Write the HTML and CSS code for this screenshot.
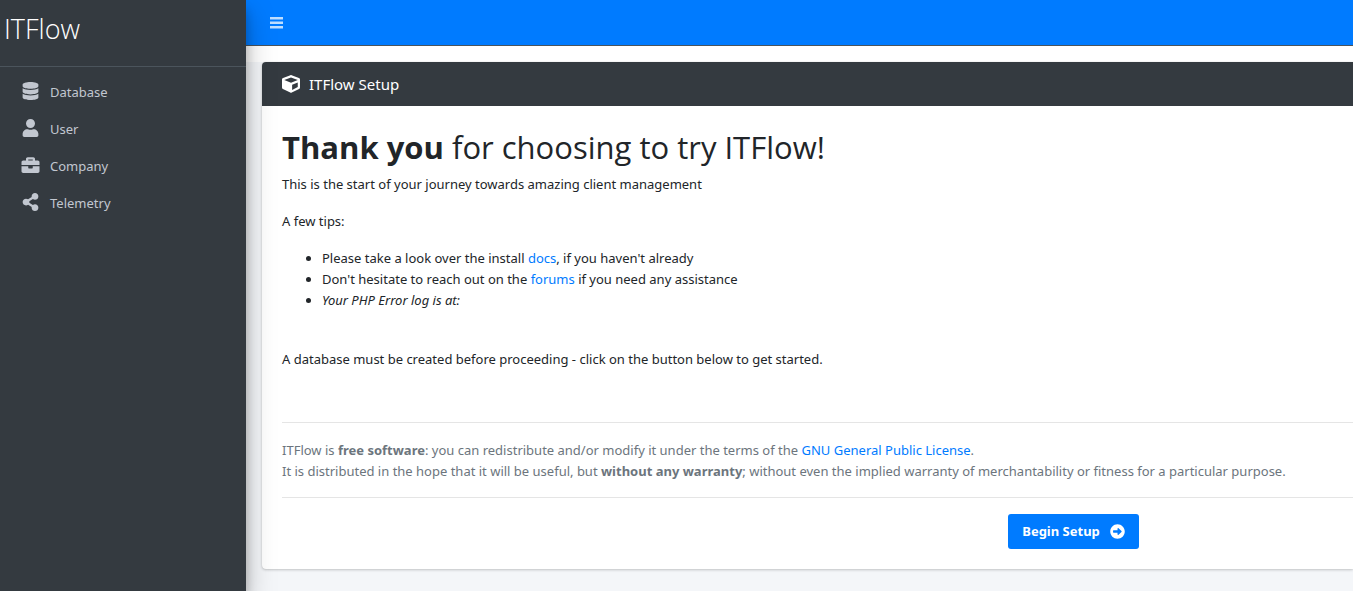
FILE: index.html
```html
<!DOCTYPE html>
<html lang="en">
<head>
<meta charset="utf-8">
<meta name="viewport" content="width=device-width, initial-scale=1">
<title>ITFlow Setup</title>
<link rel="stylesheet" href="styles.css">
</head>
<body>
<div class="wrapper">
  <aside class="sidebar">
    <a class="brand" href="#">ITFlow</a>
    <nav class="side-nav" aria-label="Setup steps">
      <a class="nav-link" href="#database"><svg class="nav-icon" viewBox="0 0 448 512" aria-hidden="true"><path d="M448 73.143v45.714C448 159.143 347.667 192 224 192S0 159.143 0 118.857V73.143C0 32.857 100.333 0 224 0s224 32.857 224 73.143zM448 176v102.857C448 319.143 347.667 352 224 352S0 319.143 0 278.857V176c48.125 33.143 136.208 48.572 224 48.572S399.874 209.143 448 176zm0 160v102.857C448 479.143 347.667 512 224 512S0 479.143 0 438.857V336c48.125 33.143 136.208 48.572 224 48.572S399.874 369.143 448 336z"/></svg><span>Database</span></a>
      <a class="nav-link" href="#user"><svg class="nav-icon" viewBox="0 0 448 512" aria-hidden="true"><path d="M224 256c70.7 0 128-57.3 128-128S294.7 0 224 0 96 57.3 96 128s57.3 128 128 128zm89.6 32h-16.7c-22.2 10.2-46.9 16-72.9 16s-50.6-5.8-72.9-16h-16.7C60.2 288 0 348.2 0 422.4V464c0 26.5 21.5 48 48 48h352c26.5 0 48-21.5 48-48v-41.6c0-74.2-60.2-134.4-134.4-134.4z"/></svg><span>User</span></a>
      <a class="nav-link" href="#company"><svg class="nav-icon" viewBox="0 0 512 512" aria-hidden="true"><path d="M320 336c0 8.84-7.16 16-16 16h-96c-8.84 0-16-7.16-16-16v-48H0v144c0 25.6 22.4 48 48 48h416c25.6 0 48-22.4 48-48V288H320v48zm144-208h-80V80c0-25.6-22.4-48-48-48H176c-25.6 0-48 22.4-48 48v48H48c-25.6 0-48 22.4-48 48v80h512v-80c0-25.6-22.4-48-48-48zm-144 0H192V96h128v32z"/></svg><span>Company</span></a>
      <a class="nav-link" href="#telemetry"><svg class="nav-icon" viewBox="0 0 448 512" aria-hidden="true"><path d="M352 320c-22.608 0-43.387 7.819-59.79 20.895l-102.486-64.054a96.551 96.551 0 0 0 0-41.683l102.486-64.054C308.613 184.181 329.392 192 352 192c53.019 0 96-42.981 96-96S405.019 0 352 0s-96 42.981-96 96c0 7.158.79 14.13 2.276 20.841L155.79 180.895C139.387 167.819 118.608 160 96 160c-53.019 0-96 42.981-96 96s42.981 96 96 96c22.608 0 43.387-7.819 59.79-20.895l102.486 64.054A96.301 96.301 0 0 0 256 416c0 53.019 42.981 96 96 96s96-42.981 96-96-42.981-96-96-96z"/></svg><span>Telemetry</span></a>
    </nav>
  </aside>
  <div class="page">
    <header class="navbar">
      <button class="menu-button" type="button" aria-label="Toggle menu"><svg class="menu-icon" viewBox="0 0 13 13" aria-hidden="true"><path d="M0 1h13v2.5H0zM0 5.5h13V8H0zM0 10h13v2.5H0z"/></svg></button>
    </header>
    <main class="content">
      <section class="card">
        <h3 class="card-header"><svg class="cube-icon" viewBox="0 0 512 512" aria-hidden="true"><path d="M239.1 6.3l-208 78c-18.7 7-31.1 25-31.1 45v225.1c0 18.2 10.3 34.8 26.5 42.9l208 104c13.5 6.8 29.4 6.8 42.9 0l208-104c16.3-8.1 26.5-24.8 26.5-42.9V129.3c0-20-12.4-37.9-31.1-44.9l-208-78C262 2.2 250 2.2 239.1 6.3zM256 68.4l192 72v1.1l-192 78-192-78v-1.1l192-72zm32 356V275.5l160-65v133.9l-160 80z"/></svg><span>ITFlow Setup</span></h3>
        <div class="card-body">
          <h1 class="title"><b>Thank you</b> for choosing to try ITFlow!</h1>
          <p class="text">This is the start of your journey towards amazing client management</p>
          <p class="text">A few tips:</p>
          <ul class="tips">
            <li>Please take a look over the install <a href="#docs">docs</a>, if you haven't already</li>
            <li>Don't hesitate to reach out on the <a href="#forums">forums</a> if you need any assistance</li>
            <li><i>Your PHP Error log is at:</i></li>
          </ul>
          <p class="text notice">A database must be created before proceeding - click on the button below to get started.</p>
          <div class="license">
            <p>ITFlow is <b>free software</b>: you can redistribute and/or modify it under the terms of the <a href="#gpl">GNU General Public License</a>.</p>
            <p>It is distributed in the hope that it will be useful, but <b>without any warranty</b>; without even the implied warranty of merchantability or fitness for a particular purpose.</p>
          </div>
          <div class="actions">
            <button class="begin-button" type="button"><span>Begin Setup</span><svg class="arrow-icon" viewBox="0 0 512 512" aria-hidden="true"><path d="M256 8c137 0 248 111 248 248S393 504 256 504 8 393 8 256 119 8 256 8zM120 216c-9 0-16 7-16 16v48c0 9 7 16 16 16h136v58c0 20 22 28 36 14l100-96c9-9 9-23 0-32l-100-96c-14-14-36-6-36 14v58z"/></svg></button>
          </div>
        </div>
      </section>
    </main>
  </div>
</div>
</body>
</html>
```

FILE: styles.css
```css
* {
  box-sizing: border-box;
}

body {
  margin: 0;
  font-family: "Noto Sans", "Open Sans", sans-serif;
  font-size: 13px;
  line-height: 21px;
  color: #212529;
  background: #f4f6f9;
}

h1,
h3,
p,
ul {
  margin: 0;
}

a {
  color: #007bff;
  text-decoration: none;
}

svg {
  display: block;
  fill: currentColor;
}

.wrapper {
  display: flex;
  min-height: 100vh;
}

.sidebar {
  position: relative;
  z-index: 1;
  flex: 0 0 246px;
  background: #343a40;
  box-shadow: 0 14px 28px rgba(0, 0, 0, 0.25), 0 10px 10px rgba(0, 0, 0, 0.22);
}

.brand {
  display: block;
  padding: 9px 4px 17px;
  border-bottom: 1px solid #4b545c;
  color: #fff;
  font-family: "Open Sans", sans-serif;
  font-size: 27px;
  font-weight: 300;
  line-height: 40px;
}

.side-nav {
  padding: 7px 8px;
}

.nav-link {
  display: flex;
  align-items: flex-start;
  gap: 9px;
  padding: 8px 12px;
  color: #c2c7d0;
}

.nav-icon {
  width: 21px;
  height: 18px;
}

.page {
  flex: 1;
  min-width: 0;
}

.navbar {
  display: flex;
  align-items: center;
  height: 46px;
  padding-left: 16px;
  background: #007bff;
  border-bottom: 1px solid #4b545c;
}

.menu-button {
  padding: 8px;
  border: 0;
  background: none;
  color: rgba(255, 255, 255, 0.75);
}

.menu-icon {
  width: 13px;
  height: 13px;
}

.content {
  padding: 16px 0 16px 16px;
  background: linear-gradient(#fff 16px, transparent 16px);
}

.card {
  background: #fff;
  border-radius: 4px 0 0 4px;
  box-shadow: 0 0 1px rgba(0, 0, 0, 0.13), 0 1px 3px rgba(0, 0, 0, 0.2);
}

.card-header {
  display: flex;
  align-items: center;
  gap: 9px;
  padding: 10px 20px;
  border-radius: 4px 0 0;
  background: #343a40;
  color: #fff;
  font-size: 15px;
  font-weight: 400;
  line-height: 24px;
}

.cube-icon {
  width: 18px;
  height: 18px;
}

.card-body {
  padding: 20px 0 20px 20px;
}

.title {
  margin-bottom: 6px;
  font-family: "Open Sans", sans-serif;
  font-size: 31px;
  font-weight: 400;
  line-height: 42px;
}

.text {
  margin-bottom: 16px;
}

.tips {
  padding-left: 40px;
}

.notice {
  margin: 38px 0 52px;
}

.license {
  padding: 17px 0 15px;
  border: solid #e5e5e5;
  border-width: 1px 0;
  color: #6c757d;
}

.actions {
  display: flex;
  justify-content: flex-end;
  padding: 16px 20% 0 0;
}

.begin-button {
  display: flex;
  align-items: center;
  gap: 10px;
  padding: 7px 14px;
  border: 0;
  border-radius: 3px;
  background: #007bff;
  color: #fff;
  font: inherit;
  font-weight: 700;
}

.arrow-icon {
  width: 15px;
  height: 15px;
}
```
